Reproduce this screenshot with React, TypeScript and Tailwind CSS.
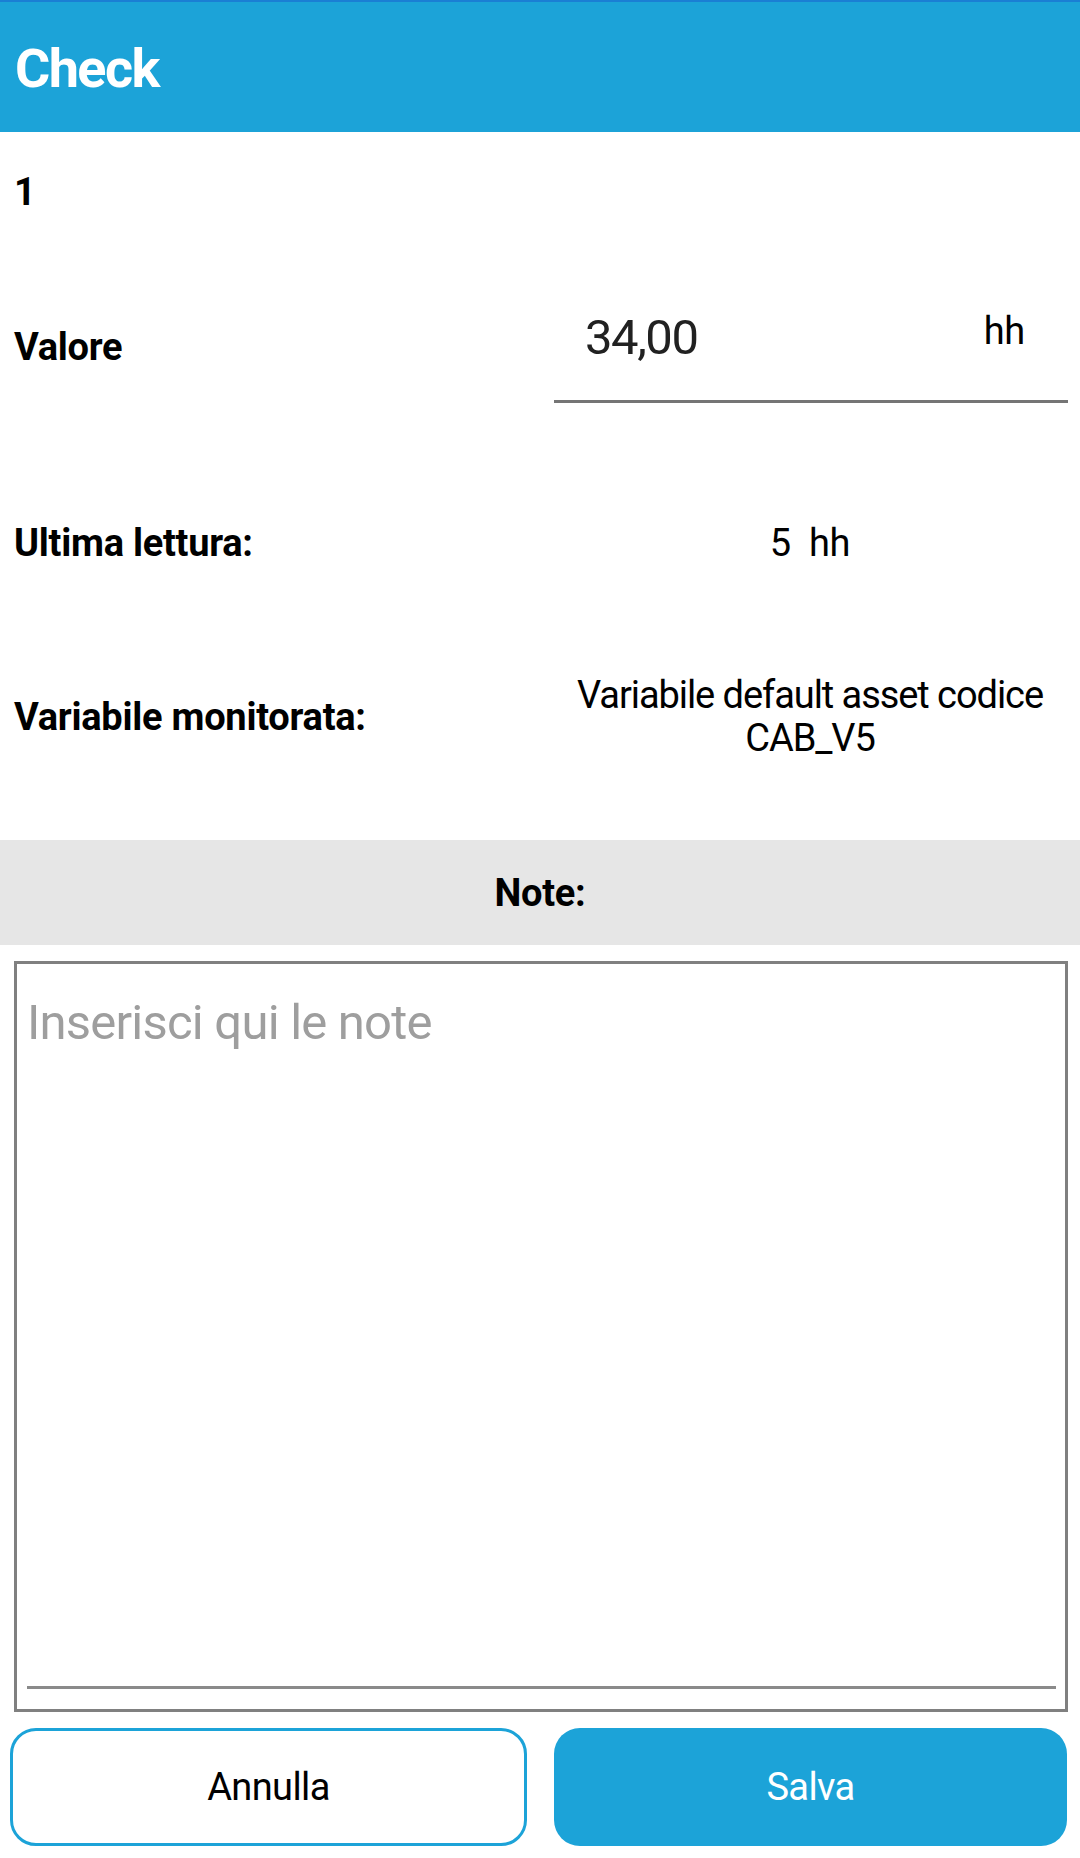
import React from "react";

const font = { fontFamily: "Roboto, 'Noto Sans', sans-serif", letterSpacing: "-0.016em" };

function Header() {
  return (
    <div className="h-[132px] bg-[#1ca3d8] border-t-2 border-[#1a7fd4] pl-[15px] pt-[35px]">
      <h1 className="text-[54px] leading-[64px] font-bold text-white tracking-[-0.03em]">Check</h1>
    </div>
  );
}

function ValueField() {
  return (
    <div className="ml-[14px] w-[514px] pt-[94px]">
      <div className="flex items-start justify-between pl-[31px] pr-[43px]">
        <span className="text-[49px] leading-[58px] text-[#212121] tracking-[-0.03em]">34,00</span>
        <span className="text-[38px] leading-[45px] text-black">hh</span>
      </div>
      <div className="mt-[33px] h-[3px] bg-[#757575]" />
    </div>
  );
}

export default function App() {
  return (
    <div className="w-[1080px] h-[1858px] overflow-hidden bg-white text-black" style={font}>
      <Header />

      {/* record index */}
      <div className="mt-[38px] pl-[14px] text-[38px] leading-[45px] font-bold">1</div>

      {/* reading input */}
      <div className="flex">
        <div className="w-[540px] pl-[14px] pt-[110px] text-[38px] leading-[45px] font-bold">Valore</div>
        <ValueField />
      </div>

      {/* last reading */}
      <div className="mt-[118px] flex text-[38px] leading-[45px]">
        <div className="w-[540px] pl-[14px] font-bold">Ultima lettura:</div>
        <div className="w-[540px] text-center">
          5<span className="ml-[18px]">hh</span>
        </div>
      </div>

      {/* monitored variable */}
      <div className="mt-[108px] flex text-[38px]">
        <div className="w-[540px] pl-[14px] pt-[21px] leading-[45px] font-bold">Variabile monitorata:</div>
        <div className="w-[540px] text-center leading-[43px] tracking-[-0.028em]">
          Variabile default asset codice
          <br />
          CAB_V5
        </div>
      </div>

      {/* notes section */}
      <div className="mt-[80px] h-[105px] bg-[#e6e6e6] pt-[31px] text-center text-[38px] leading-[45px] font-bold">
        Note:
      </div>

      <div className="mt-[16px] ml-[14px] w-[1054px] h-[751px] border-[3px] border-[#808080] flex flex-col pl-[10px] pr-[9px] pt-[30px] pb-[20px]">
        <textarea
          className="flex-1 w-full resize-none outline-none border-b-[3px] border-[#8a8a8a] text-[49px] leading-[58px] text-[#212121] placeholder:text-[#9e9e9e]"
          style={font}
          placeholder="Inserisci qui le note"
        />
      </div>

      {/* actions */}
      <div className="mt-[16px] flex h-[118px] text-[38px]">
        <button
          className="ml-[10px] w-[517px] h-full rounded-[26px] border-[3px] border-[#1ca3d8] bg-white text-black"
          style={font}
        >
          Annulla
        </button>
        <button
          className="ml-[27px] w-[513px] h-full rounded-[26px] bg-[#1ca3d8] text-white"
          style={font}
        >
          Salva
        </button>
      </div>
    </div>
  );
}
